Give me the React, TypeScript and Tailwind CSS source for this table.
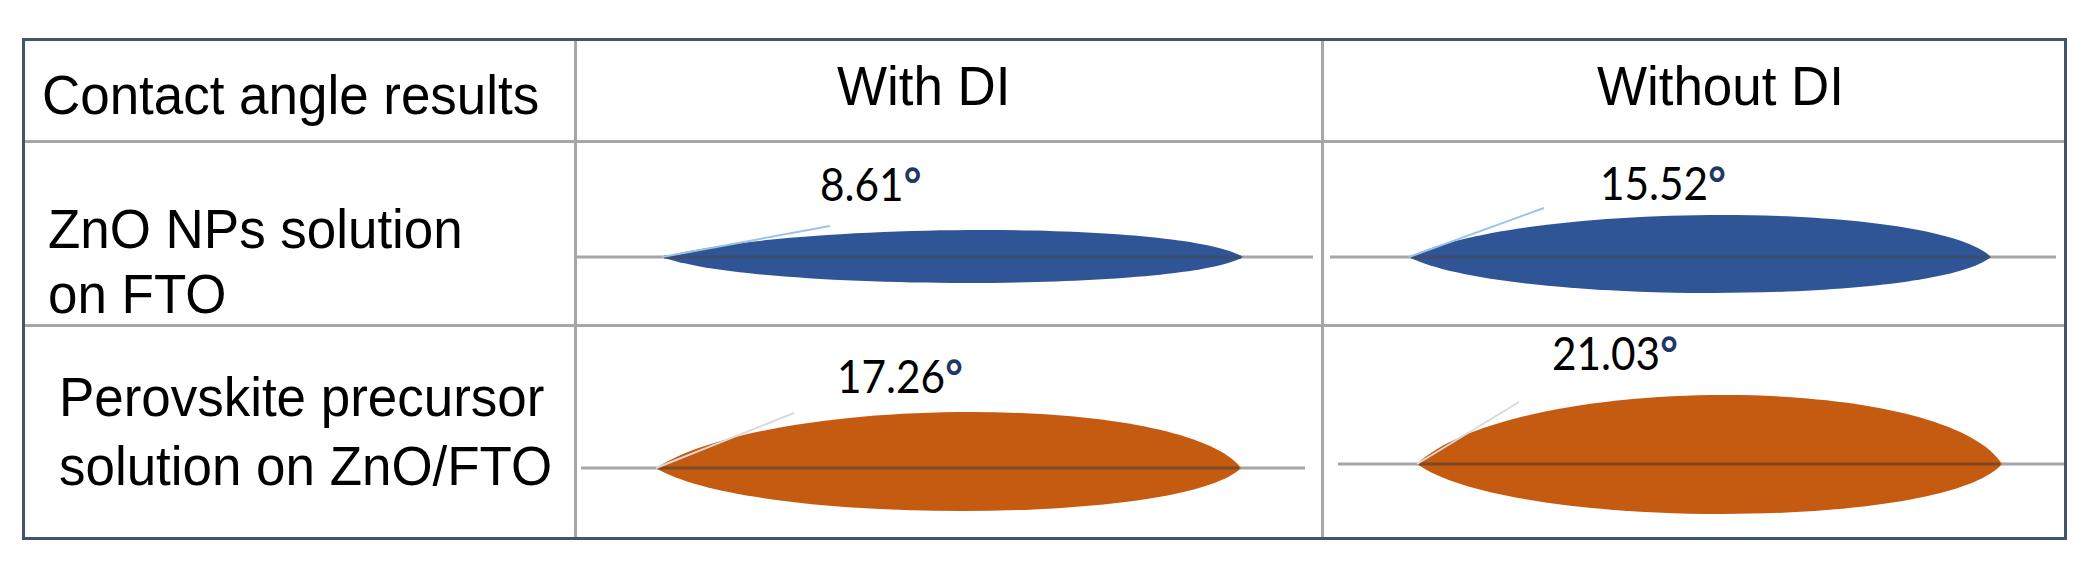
import React from "react";

type Drop = {
  label: string;
  fill: string;
  inner: string;
  tangent: string;
  L: number;
  R: number;
  b: number;
  hu: number;
  hl: number;
  a: number;
  tx: number;
  ty: number;
  x1: number;
  x2: number;
  w: number;
  h: number;
  labelPos: string;
};

const drops: Drop[] = [
  {
    label: "8.61",
    fill: "#2f5597",
    inner: "#3d4d6e",
    tangent: "#9dc3e6",
    L: 85,
    R: 666,
    b: 114,
    hu: 27,
    hl: 26,
    a: 0.24,
    tx: 253,
    ty: 83,
    x1: 0,
    x2: 736,
    w: 744,
    h: 181,
    labelPos: "left-[243px] top-[18px]",
  },
  {
    label: "15.52",
    fill: "#2f5597",
    inner: "#3d4d6e",
    tangent: "#9dc3e6",
    L: 85,
    R: 667,
    b: 114,
    hu: 42,
    hl: 36,
    a: 0.2,
    tx: 220,
    ty: 65,
    x1: 6,
    x2: 732,
    w: 740,
    h: 181,
    labelPos: "left-[276px] top-[17px]",
  },
  {
    label: "17.26",
    fill: "#c55a11",
    inner: "#7e4a26",
    tangent: "#d9d9d9",
    L: 79,
    R: 664,
    b: 141,
    hu: 56,
    hl: 43,
    a: 0.2,
    tx: 217,
    ty: 86,
    x1: 4,
    x2: 728,
    w: 744,
    h: 210,
    labelPos: "left-[260px] top-[26px]",
  },
  {
    label: "21.03",
    fill: "#c55a11",
    inner: "#7e4a26",
    tangent: "#d9d9d9",
    L: 93,
    R: 678,
    b: 137,
    hu: 69,
    hl: 50,
    a: 0.17,
    tx: 195,
    ty: 75,
    x1: 14,
    x2: 740,
    w: 740,
    h: 210,
    labelPos: "left-[228px] top-[3px]",
  },
];

function DropCell({ d, className }: { d: Drop; className: string }) {
  const wd = d.R - d.L;
  const up = d.b - (d.hu * 4) / 3;
  const lo = d.b + (d.hl * 4) / 3;
  const path = `M ${d.L} ${d.b} C ${d.L + d.a * wd} ${up}, ${d.R - 0.1 * wd} ${up}, ${d.R} ${d.b} C ${d.R - 0.1 * wd} ${lo}, ${d.L + 0.16 * wd} ${lo}, ${d.L} ${d.b} Z`;
  return (
    <div className={className}>
      <svg
        className="absolute inset-0"
        width={d.w}
        height={d.h}
        viewBox={`0 0 ${d.w} ${d.h}`}
      >
        <line x1={d.x1} y1={d.b} x2={d.x2} y2={d.b} stroke="#a6a6a6" strokeWidth={3} />
        <path d={path} fill={d.fill} />
        <line x1={d.L + 2} y1={d.b} x2={d.R - 2} y2={d.b} stroke={d.inner} strokeWidth={3} />
        <line x1={d.L} y1={d.b} x2={d.tx} y2={d.ty} stroke={d.tangent} strokeWidth={2} />
      </svg>
      <div
        className={`absolute ${d.labelPos} origin-top-left scale-x-[0.92] font-['Lato',sans-serif] text-[46px] leading-none text-black whitespace-nowrap`}
      >
        {d.label}
        <span className="font-bold text-[#1f3864]">°</span>
      </div>
    </div>
  );
}

const txt =
  "origin-top-left scale-x-[0.945] text-[56px] leading-[65px] whitespace-nowrap";
const txt3 =
  "origin-top-left scale-x-[0.945] text-[56px] leading-[69px] whitespace-nowrap";

export default function App() {
  return (
    <div className="min-h-screen bg-white pt-[38px] pl-[22px] font-['Liberation_Sans',Arial,sans-serif] text-black">
      <div className="w-[2045px] h-[502px] border-[3px] border-[#44546a] grid grid-cols-[552px_747px_740px] grid-rows-[102px_184px_210px]">
        <div className="border-r-[3px] border-b-[3px] border-[#a6a6a6] pl-[17px] pt-[21px]">
          <div className={txt}>Contact angle results</div>
        </div>
        <div className="border-r-[3px] border-b-[3px] border-[#a6a6a6] pl-[260px] pt-[12px]">
          <div className={txt}>With DI</div>
        </div>
        <div className="border-b-[3px] border-[#a6a6a6] pl-[273px] pt-[12px]">
          <div className={txt}>Without DI</div>
        </div>

        <div className="border-r-[3px] border-b-[3px] border-[#a6a6a6] pl-[23px] pt-[53px]">
          <div className={txt}>
            ZnO NPs solution
            <br />
            on FTO
          </div>
        </div>
        <DropCell
          d={drops[0]}
          className="relative border-r-[3px] border-b-[3px] border-[#a6a6a6]"
        />
        <DropCell d={drops[1]} className="relative border-b-[3px] border-[#a6a6a6]" />

        <div className="border-r-[3px] border-[#a6a6a6] pl-[34px] pt-[35px]">
          <div className={txt3}>
            Perovskite precursor
            <br />
            solution on ZnO/FTO
          </div>
        </div>
        <DropCell d={drops[2]} className="relative border-r-[3px] border-[#a6a6a6]" />
        <DropCell d={drops[3]} className="relative" />
      </div>
    </div>
  );
}
